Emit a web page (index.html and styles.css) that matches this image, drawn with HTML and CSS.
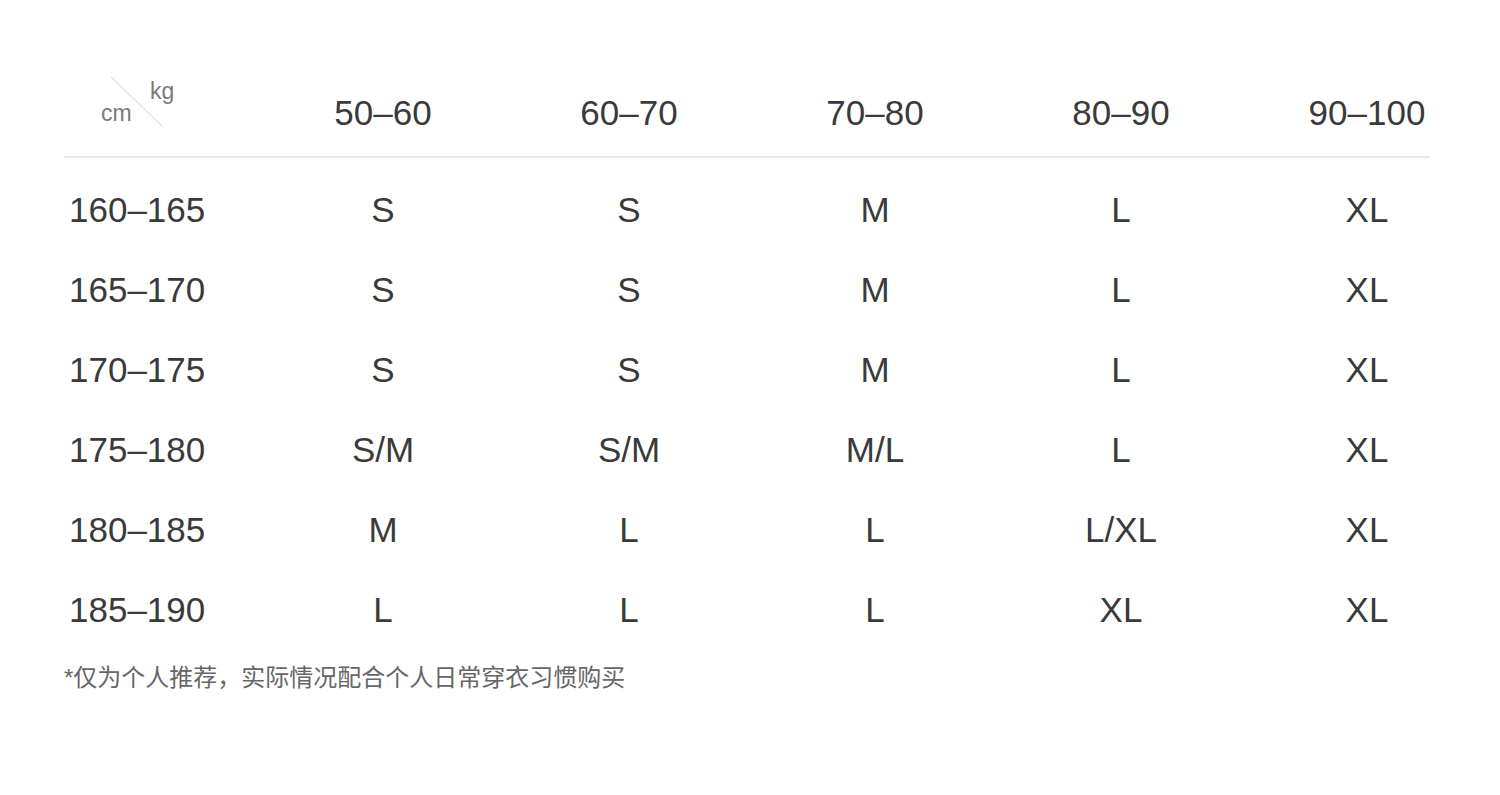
FILE: index.html
```html
<!DOCTYPE html>
<html lang="zh-CN">
<head>
<meta charset="utf-8">
<title>尺码推荐</title>
<link rel="stylesheet" href="styles.css">
</head>
<body>
<main class="chart">
  <div class="row head">
    <div class="corner">
      <svg class="diag" width="52" height="50" viewBox="0 0 52 50"><line x1="0" y1="0" x2="52" y2="50" stroke="#d2d2d2" stroke-width="1"/></svg>
      <span class="unit kg">kg</span>
      <span class="unit cm">cm</span>
    </div>
    <div class="cell">50–60</div>
    <div class="cell">60–70</div>
    <div class="cell">70–80</div>
    <div class="cell">80–90</div>
    <div class="cell">90–100</div>
  </div>
  <div class="sep"></div>
  <div class="body">
    <div class="row"><div class="label">160–165</div><div class="cell">S</div><div class="cell">S</div><div class="cell">M</div><div class="cell">L</div><div class="cell">XL</div></div>
    <div class="row"><div class="label">165–170</div><div class="cell">S</div><div class="cell">S</div><div class="cell">M</div><div class="cell">L</div><div class="cell">XL</div></div>
    <div class="row"><div class="label">170–175</div><div class="cell">S</div><div class="cell">S</div><div class="cell">M</div><div class="cell">L</div><div class="cell">XL</div></div>
    <div class="row"><div class="label">175–180</div><div class="cell">S/M</div><div class="cell">S/M</div><div class="cell">M/L</div><div class="cell">L</div><div class="cell">XL</div></div>
    <div class="row"><div class="label">180–185</div><div class="cell">M</div><div class="cell">L</div><div class="cell">L</div><div class="cell">L/XL</div><div class="cell">XL</div></div>
    <div class="row"><div class="label">185–190</div><div class="cell">L</div><div class="cell">L</div><div class="cell">L</div><div class="cell">XL</div><div class="cell">XL</div></div>
  </div>
  <p class="note">*仅为个人推荐，实际情况配合个人日常穿衣习惯购买</p>
</main>
</body>
</html>
```

FILE: styles.css
```css
html, body {
  margin: 0;
  padding: 0;
  background: #ffffff;
}

body {
  font-family: "Liberation Sans", Arial, "Noto Sans CJK SC", sans-serif;
  color: #3a3a3a;
}

.chart {
  padding: 68px 0 0 64px;
  width: 1366px;
}

.row {
  display: grid;
  grid-template-columns: 196px repeat(5, 246px);
  align-items: center;
  height: 80px;
  font-size: 35px;
  line-height: 35px;
}

.row.head {
  height: 88px;
}

.cell {
  text-align: center;
}

.label {
  text-align: left;
  padding-left: 5px;
}

.corner {
  position: relative;
  height: 88px;
}

.diag {
  position: absolute;
  left: 47px;
  top: 9px;
}

.unit {
  position: absolute;
  font-size: 23px;
  line-height: 24px;
  color: #7a7a7a;
}

.kg {
  left: 86px;
  top: 11px;
}

.cm {
  left: 37px;
  top: 33px;
}

.sep {
  width: 1366px;
  height: 2px;
  background: #e8e8e8;
}

.body {
  margin-top: 11px;
}

.note {
  margin: 14px 0 0 0;
  font-family: "Liberation Sans", "Noto Sans CJK SC", sans-serif;
  font-size: 24px;
  line-height: 30px;
  color: #666666;
}
```
